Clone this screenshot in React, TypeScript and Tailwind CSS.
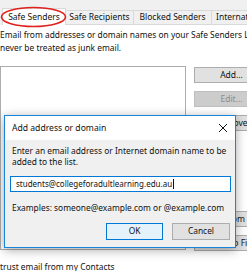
import type { ReactNode } from 'react';

const FONT = "font-['Noto_Sans','Open_Sans',sans-serif]";

function Tab({ label, active, className }: { label: string; active?: boolean; className?: string }) {
  return (
    <div
      className={
        active
          ? `flex h-[17px] items-center border border-b-0 border-[#d9d9d9] bg-white ${className ?? ''}`
          : `mt-[2px] flex h-[15px] items-center border border-l-0 border-[#d9d9d9] bg-[#f0f0f0] ${className ?? ''}`
      }
    >
      <span className="whitespace-nowrap text-[8.5px] text-[#111]">{label}</span>
    </div>
  );
}

function SideButton({ children, disabled }: { children: ReactNode; disabled?: boolean }) {
  return (
    <div
      className={
        disabled
          ? 'flex h-[16px] w-[75px] shrink-0 items-center justify-center border border-[#bfbfbf] bg-[#cccccc] text-[8.5px] text-[#8c8c8c]'
          : 'flex h-[16px] w-[75px] shrink-0 items-center justify-center border border-[#adadad] bg-[#e1e1e1] text-[8.5px] text-[#111]'
      }
    >
      <span className="whitespace-nowrap">{children}</span>
    </div>
  );
}

export default function App() {
  return (
    <div className={`relative h-[271px] w-[247px] overflow-hidden bg-white ${FONT}`}>
      {/* tab strip */}
      <div className="flex h-[25px] items-end bg-[#f0f0f0] pl-[2px]">
        <div className="flex items-start">
          <Tab label="Safe Senders" active className="w-[64px] justify-center" />
          <Tab label="Safe Recipients" className="w-[68px] justify-center" />
          <Tab label="Blocked Senders" className="w-[78px] justify-center" />
          <Tab label="International" className="w-[70px] pl-[4px]" />
        </div>
      </div>

      {/* page body */}
      <div className="flex flex-col pt-[3px]">
        <p className="whitespace-nowrap text-[8.4px] leading-[13px] text-[#111]">
          Email from addresses or domain names on your Safe Senders List will
        </p>
        <p className="whitespace-nowrap text-[8.4px] leading-[13px] text-[#111]">
          never be treated as junk email.
        </p>

        <div className="mt-[12px] flex gap-[8px]">
          <div className="h-[184px] w-[186px] shrink-0 border border-[#adadad] bg-white" />
          <div className="flex flex-col gap-[8px] pt-[1px]">
            <SideButton>Add...</SideButton>
            <SideButton disabled>Edit...</SideButton>
            <SideButton>Remove</SideButton>
            <div className="h-[64px]" />
            <SideButton>Import from File...</SideButton>
            <SideButton>Export to File...</SideButton>
          </div>
        </div>

        <p className="mt-[10px] whitespace-nowrap text-[8.4px] leading-[11px] text-[#111]">
          trust email from my Contacts
        </p>
      </div>

      {/* red highlight around the active tab */}
      <svg className="absolute left-0 top-[6px]" width="70" height="22" viewBox="0 0 70 22">
        <ellipse cx="33.5" cy="11" rx="32" ry="9.5" fill="none" stroke="#e0201c" strokeWidth="1.6" />
      </svg>

      {/* Add address or domain dialog */}
      <div className="absolute left-[4px] top-[115px] flex h-[133px] w-[232px] flex-col border border-[#1883d7] bg-[#f0f0f0] shadow-[0_2px_10px_rgba(0,0,0,0.35)]">
        <div className="flex h-[24px] shrink-0 items-center justify-between bg-white pl-[7px] pr-[7px]">
          <span className="whitespace-nowrap text-[8.6px] text-[#111]">Add address or domain</span>
          <svg width="10" height="10" viewBox="0 0 10 10">
            <path d="M1 1 L9 9 M9 1 L1 9" stroke="#111" strokeWidth="1" />
          </svg>
        </div>
        <div className="flex flex-1 flex-col px-[5px] pt-[5px]">
          <p className="whitespace-nowrap pl-[2px] text-[8.4px] leading-[11px] text-[#111]">
            Enter an email address or Internet domain name to be
          </p>
          <p className="whitespace-nowrap pl-[2px] text-[8.4px] leading-[11px] text-[#111]">
            added to the list.
          </p>
          <div className="mt-[9px] flex h-[16px] w-[221px] items-center border border-[#0078d7] bg-white pl-[5px]">
            <span className="whitespace-nowrap text-[8px] text-[#111]">students@collegeforadultlearning.edu.au</span>
            <span className="ml-[1px] h-[10px] w-[1px] bg-[#111]" />
          </div>
          <p className="mt-[10px] whitespace-nowrap pl-[2px] text-[8.4px] leading-[12px] text-[#111]">
            Examples: someone@example.com or @example.com
          </p>
          <div className="mt-[9px] flex justify-end gap-[9px]">
            <div className="flex h-[17px] w-[57px] items-center justify-center border border-[#0078d7] bg-[#e5f1fb] text-[8.4px] text-[#111]">
              OK
            </div>
            <div className="flex h-[17px] w-[58px] items-center justify-center border border-[#adadad] bg-[#e1e1e1] text-[8.4px] text-[#111]">
              Cancel
            </div>
          </div>
        </div>
      </div>
    </div>
  );
}
